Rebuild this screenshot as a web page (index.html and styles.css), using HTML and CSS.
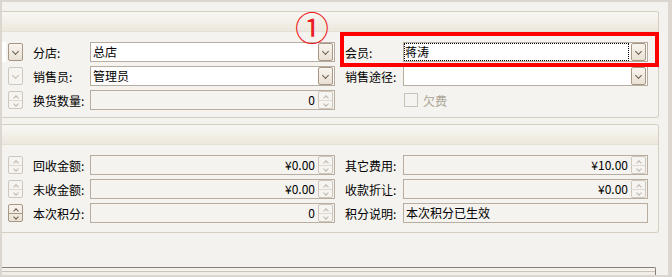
FILE: index.html
```html
<!DOCTYPE html>
<html lang="zh-CN">
<head>
    <meta charset="UTF-8">
    <title>销售单</title>
    <link rel="stylesheet" href="styles.css">
</head>
<body>
    <div class="frame">
        <div class="mark-num">①</div>
        <div class="mark-box"></div>

        <!-- 基本信息 -->
        <section class="panel">
            <div class="panel-head"></div>
            <div class="panel-body">
                <div class="stub stub-white"><span class="btn drop"></span></div>
                <label class="lbl">分店:</label>
                <div class="field edit"><span class="val">总店</span><span class="btn drop"></span></div>
                <label class="lbl">会员:</label>
                <div class="field edit"><span class="val focus">蒋涛</span><span class="btn drop"></span></div>

                <div class="stub"><span class="btn drop off"></span></div>
                <label class="lbl">销售员:</label>
                <div class="field edit"><span class="val">管理员</span><span class="btn drop"></span></div>
                <label class="lbl">销售途径:</label>
                <div class="field edit"><span class="val"></span><span class="btn drop"></span></div>

                <div class="stub"><span class="btn spin off"><i class="up"></i><i class="dn"></i></span></div>
                <label class="lbl">换货数量:</label>
                <div class="field"><span class="val num">0</span><span class="btn spin off"><i class="up"></i><i class="dn"></i></span></div>
                <div class="lbl"></div>
                <div class="check"><span class="box"></span><span class="check-text">欠费</span></div>
            </div>
        </section>

        <!-- 结算信息 -->
        <section class="panel panel-pay">
            <div class="panel-head"></div>
            <div class="panel-body">
                <div class="stub"><span class="btn spin off"><i class="up"></i><i class="dn"></i></span></div>
                <label class="lbl">回收金额:</label>
                <div class="field"><span class="val num">¥0.00</span><span class="btn spin off"><i class="up"></i><i class="dn"></i></span></div>
                <label class="lbl">其它费用:</label>
                <div class="field"><span class="val num">¥10.00</span><span class="btn spin off"><i class="up"></i><i class="dn"></i></span></div>

                <div class="stub"><span class="btn spin off"><i class="up"></i><i class="dn"></i></span></div>
                <label class="lbl">未收金额:</label>
                <div class="field"><span class="val num">¥0.00</span><span class="btn spin off"><i class="up"></i><i class="dn"></i></span></div>
                <label class="lbl">收款折让:</label>
                <div class="field"><span class="val num">¥0.00</span><span class="btn spin off"><i class="up"></i><i class="dn"></i></span></div>

                <div class="stub"><span class="btn spin"><i class="up"></i><i class="dn"></i></span></div>
                <label class="lbl">本次积分:</label>
                <div class="field"><span class="val num">0</span><span class="btn spin off"><i class="up"></i><i class="dn"></i></span></div>
                <label class="lbl">积分说明:</label>
                <div class="field"><span class="val">本次积分已生效</span></div>
            </div>
        </section>

        <section class="panel-foot"><div class="foot-line"></div></section>
    </div>
</body>
</html>
```

FILE: styles.css
```css
* {
    box-sizing: border-box;
    margin: 0;
    padding: 0;
}

body {
    background: #dcd6d0;
    font-family: "Noto Sans CJK SC", "DejaVu Sans", sans-serif;
    font-size: 12px;
    color: #000;
    padding: 2px 4px 2px 2px;
}

.frame {
    position: relative;
    height: 273px;
    background: #f4f2ee;
    overflow: hidden;
    padding-top: 9px;
}

/* annotation overlay */
.mark-num {
    position: absolute;
    left: 293px;
    top: 5px;
    font-size: 34px;
    line-height: 40px;
    color: #ec1c24;
    z-index: 2;
}

.mark-box {
    position: absolute;
    left: 338px;
    top: 30px;
    width: 319px;
    height: 35px;
    border: 4px solid #ff0000;
    z-index: 2;
}

.panel {
    width: 657px;
    border: 1px solid #d6cec1;
    border-left: none;
    border-radius: 0 3px 3px 0;
    background: #f5f3ef;
}

.panel-pay {
    margin-top: 6px;
}

.panel-head {
    height: 20px;
    border-bottom: 1px solid #e6e0d4;
    background: linear-gradient(#f8f7f3, #ede8de);
    border-radius: 0 3px 0 0;
}

.panel-body {
    display: grid;
    grid-template-columns: 21px 67px 245px 68px 245px;
    grid-auto-rows: 20px;
    row-gap: 4px;
    padding: 10px 10px 7px 0;
}

.panel-pay .panel-body {
    padding-bottom: 9px;
}

.lbl {
    display: flex;
    align-items: center;
    padding-left: 10px;
    white-space: nowrap;
}

.field {
    display: flex;
    align-items: center;
    height: 20px;
    border: 1px solid #b8ad9f;
    padding-right: 1px;
}

.field.edit {
    background: #fff;
}

.val {
    flex: 1;
    height: 18px;
    line-height: 18px;
    padding-left: 2px;
    white-space: nowrap;
}

.val.focus {
    outline: 1px dotted #000;
    outline-offset: -1px;
    margin-right: 2px;
    padding-left: 1px;
}

.val.num {
    text-align: right;
    padding-right: 3px;
}

.stub {
    display: flex;
    align-items: center;
    justify-content: flex-end;
    height: 20px;
    padding-right: 0;
}

.stub-white {
    background: linear-gradient(to right, #fff 4px, transparent 4px);
}

/* drop-down and spin buttons */
.btn {
    width: 15px;
    height: 18px;
    border: 1px solid #a89684;
    border-radius: 2px;
    background: linear-gradient(#f8f4ee, #e9e1d4);
    position: relative;
    flex: none;
}

.btn.off {
    border-color: #cfc7bc;
    background: #f6f4f0;
}

.drop::after {
    content: "";
    position: absolute;
    left: 4px;
    top: 5px;
    width: 4px;
    height: 4px;
    border-right: 1px solid #6d5c4c;
    border-bottom: 1px solid #6d5c4c;
    transform: rotate(45deg);
}

.drop.off::after {
    border-color: #c4bcb2;
}

.spin {
    display: flex;
    flex-direction: column;
}

.spin i {
    flex: 1;
    position: relative;
}

.spin .up {
    border-bottom: 1px solid #a89684;
}

.spin.off .up {
    border-bottom-color: #e0dad2;
}

.spin i::after {
    content: "";
    position: absolute;
    left: 5px;
    width: 3px;
    height: 3px;
    border-right: 1px solid #6d5c4c;
    border-bottom: 1px solid #6d5c4c;
}

.spin .up::after {
    top: 4px;
    transform: rotate(-135deg);
}

.spin .dn::after {
    top: 1px;
    transform: rotate(45deg);
}

.spin.off i::after {
    border-color: #bdb5ab;
}

.check {
    display: flex;
    align-items: center;
    padding-left: 1px;
}

.check .box {
    width: 14px;
    height: 14px;
    border: 1px solid #cac2b6;
    background: #f6f4f0;
}

.check-text {
    margin-left: 5px;
    color: #aca597;
}

.panel-foot {
    width: 654px;
    margin-top: 34px;
    height: 10px;
    border-top: 1px solid #8c7f71;
    border-right: 1px solid #8c7f71;
    border-radius: 0 2px 0 0;
    padding-top: 3px;
}

.foot-line {
    border-top: 1px solid #cbc3b7;
    background: #f1eee8;
    height: 6px;
}
```
